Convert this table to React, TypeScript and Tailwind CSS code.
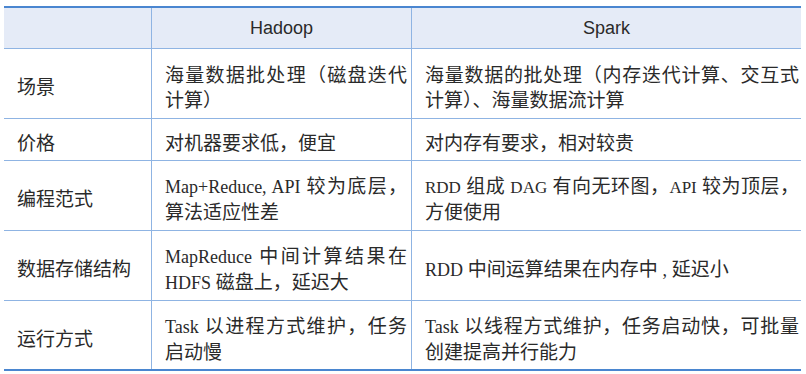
import type { ReactNode } from "react";

const L = ({ children, sm }: { children: ReactNode; sm?: boolean }) => (
  <span className={sm ? "text-[17px]" : "text-[18px]"}>{children}</span>
);

type Row = { key: string; hadoop: ReactNode; spark: ReactNode; h: string };

const rows: Row[] = [
  {
    key: "场景",
    hadoop: <>海量数据批处理（磁盘迭代计算）</>,
    spark: <>海量数据的批处理（内存迭代计算、交互式计算）、海量数据流计算</>,
    h: "h-[70px]",
  },
  {
    key: "价格",
    hadoop: <>对机器要求低，便宜</>,
    spark: <>对内存有要求，相对较贵</>,
    h: "h-[42px]",
  },
  {
    key: "编程范式",
    hadoop: (
      <>
        <L>Map+Reduce, API</L> 较为底层，算法适应性差
      </>
    ),
    spark: (
      <>
        <L sm>RDD</L> 组成 <L sm>DAG</L> 有向无环图，<L sm>API</L> 较为顶层，方便使用
      </>
    ),
    h: "h-[70px]",
  },
  {
    key: "数据存储结构",
    hadoop: (
      <>
        <L>MapReduce</L> 中间计算结果在 <L>HDFS</L> 磁盘上，延迟大
      </>
    ),
    spark: (
      <>
        <L>RDD</L> 中间运算结果在内存中 <L>,</L> 延迟小
      </>
    ),
    h: "h-[70px]",
  },
  {
    key: "运行方式",
    hadoop: (
      <>
        <L>Task</L> 以进程方式维护，任务启动慢
      </>
    ),
    spark: (
      <>
        <L>Task</L> 以线程方式维护，任务启动快，可批量创建提高并行能力
      </>
    ),
    h: "h-[68px]",
  },
];

const cell = "flex items-center pl-[13px] pt-[8px]";

export default function App() {
  return (
    <div className="w-[806px] h-[374px] bg-white pt-[6px] pl-[4px]">
      <div className="w-[797px] border-t-2 border-b-2 border-[#4a86d0] text-[#2a2a2a] font-['Liberation_Serif','Noto_Sans_CJK_SC',serif] text-[19px] leading-[25px]">
        <div className="flex h-[41px] bg-[#e5ebf7] border-b border-[#8fb4e3] font-['Liberation_Sans','Noto_Sans_CJK_SC',sans-serif] text-[18px]">
          <div className="w-[148px] border-r border-[#8fb4e3]" />
          <div className="w-[260px] border-r border-[#8fb4e3] flex items-center justify-center pt-px">
            Hadoop
          </div>
          <div className="flex-1 flex items-center justify-center pt-px">Spark</div>
        </div>
        {rows.map((r, i) => (
          <div
            key={r.key}
            className={`flex ${r.h} ${i < rows.length - 1 ? "border-b border-[#8fb4e3]" : ""}`}
          >
            <div className={`w-[148px] border-r border-[#8fb4e3] pr-[4px] ${cell}`}>
              {r.key}
            </div>
            <div className={`w-[260px] border-r border-[#8fb4e3] pr-[4px] ${cell}`}>
              <p className="w-full text-justify">{r.hadoop}</p>
            </div>
            <div className={`flex-1 pr-[2px] ${cell}`}>
              <p className="w-full text-justify">{r.spark}</p>
            </div>
          </div>
        ))}
      </div>
    </div>
  );
}
